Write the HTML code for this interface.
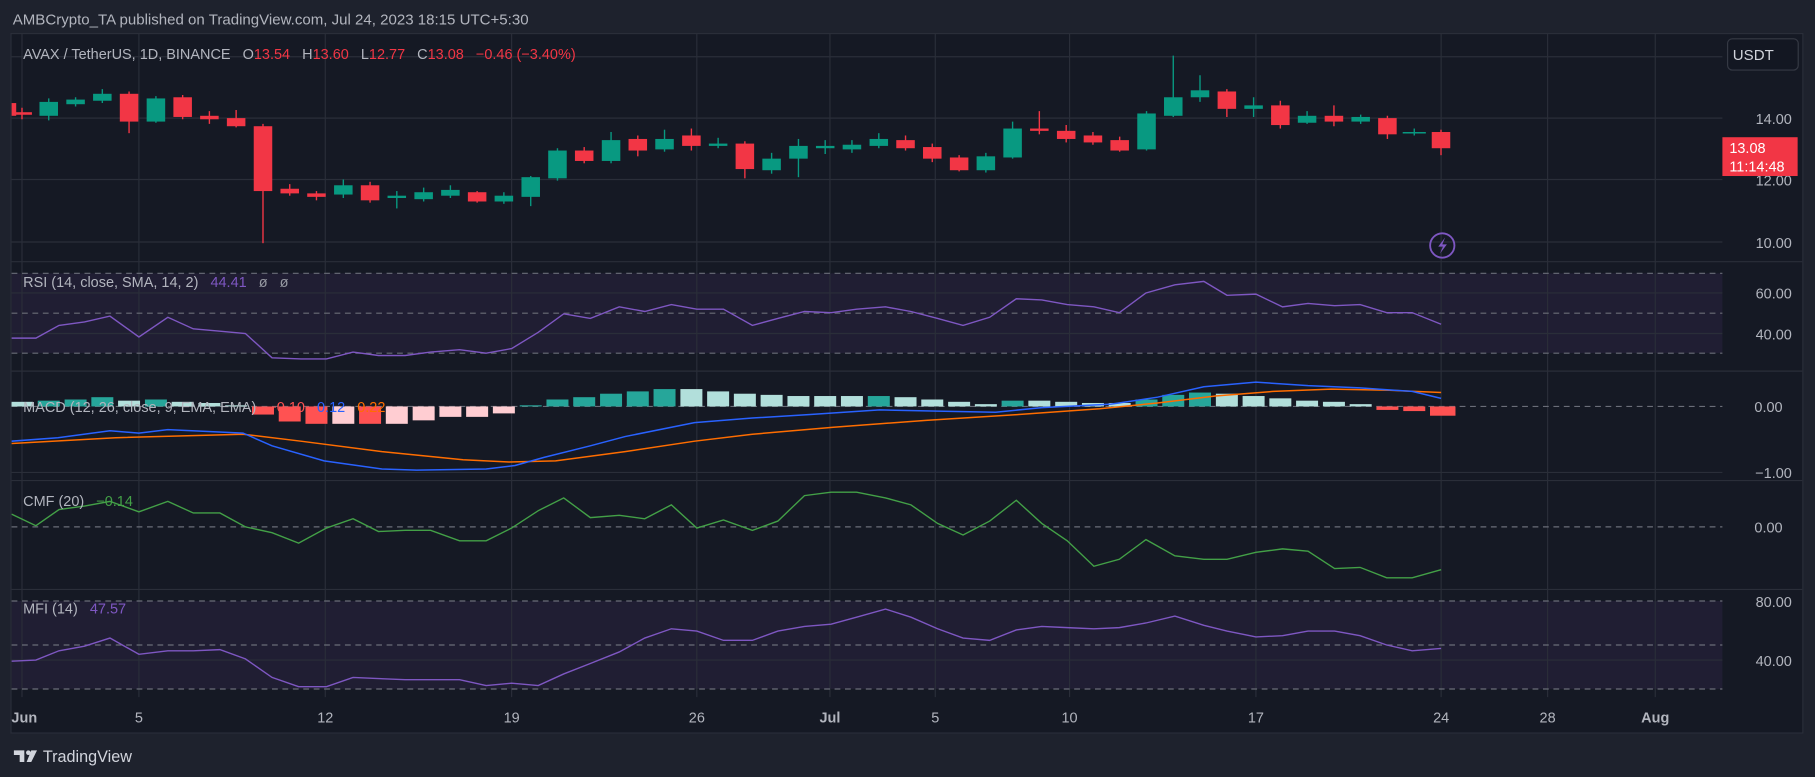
<!DOCTYPE html>
<html><head><meta charset="utf-8"><style>
html,body{margin:0;padding:0;background:#1e222d;width:1815px;height:777px;overflow:hidden}
svg{display:block}
text{font-family:"Liberation Sans","DejaVu Sans",sans-serif;white-space:pre}
</style></head><body>
<svg width="1815" height="777" viewBox="0 0 1568 671" preserveAspectRatio="none" xmlns="http://www.w3.org/2000/svg">
<defs><clipPath id="pc"><rect x="10" y="29" width="1478" height="573"/></clipPath></defs>
<rect width="1568" height="671" fill="#1e222d"/>
<text x="11" y="21" font-size="13" fill="#b2b5be">AMBCrypto_TA published on TradingView.com, Jul 24, 2023 18:15 UTC+5:30</text>
<rect x="9.5" y="29" width="1548" height="604" fill="#151924" stroke="#2a2e39" stroke-width="1"/>
<rect x="10" y="236" width="1478" height="69" fill="#201e33"/>
<rect x="10" y="519" width="1478" height="76" fill="#201e33"/>
<g stroke="#2a2e39" stroke-width="1">
<line x1="10" x2="1557" y1="226" y2="226"/><line x1="10" x2="1557" y1="320.5" y2="320.5"/>
<line x1="10" x2="1557" y1="415" y2="415"/><line x1="10" x2="1557" y1="509" y2="509"/>
<line x1="10" x2="1488" y1="49" y2="49"/><line x1="10" x2="1488" y1="102" y2="102"/>
<line x1="10" x2="1488" y1="155" y2="155"/><line x1="10" x2="1488" y1="209" y2="209"/>
<line x1="10" x2="1488" y1="253" y2="253"/><line x1="10" x2="1488" y1="288" y2="288"/>
<line x1="10" x2="1488" y1="408" y2="408"/><line x1="10" x2="1488" y1="570" y2="570"/>
<line x1="19" x2="19" y1="29" y2="602"/><line x1="120" x2="120" y1="29" y2="602"/>
<line x1="281" x2="281" y1="29" y2="602"/><line x1="442" x2="442" y1="29" y2="602"/>
<line x1="602" x2="602" y1="29" y2="602"/><line x1="717" x2="717" y1="29" y2="602"/>
<line x1="808" x2="808" y1="29" y2="602"/><line x1="924" x2="924" y1="29" y2="602"/>
<line x1="1085" x2="1085" y1="29" y2="602"/><line x1="1245" x2="1245" y1="29" y2="602"/>
<line x1="1337" x2="1337" y1="29" y2="602"/><line x1="1430" x2="1430" y1="29" y2="602"/>
</g>
<g stroke="#6a6d78" stroke-width="1" stroke-dasharray="5,4">
<line x1="10" x2="1488" y1="236" y2="236"/><line x1="10" x2="1488" y1="270.5" y2="270.5"/><line x1="10" x2="1488" y1="305" y2="305"/>
<line x1="10" x2="1488" y1="351" y2="351"/><line x1="10" x2="1488" y1="455" y2="455"/>
<line x1="10" x2="1488" y1="519" y2="519"/><line x1="10" x2="1488" y1="557" y2="557"/><line x1="10" x2="1488" y1="595" y2="595"/>
</g>
<g clip-path="url(#pc)">
<g fill="#f23645" stroke="#f23645" stroke-width="1.2">
<rect x="10" y="89" width="4" height="11" stroke="none"/>
<line x1="19" x2="19" y1="93" y2="103"/><rect x="11" y="97.5" width="16" height="1" />
<line x1="111.5" x2="111.5" y1="79" y2="115"/><rect x="103.5" y="81" width="16" height="24" stroke="none"/>
<line x1="157.8" x2="157.8" y1="82" y2="103"/><rect x="149.8" y="84" width="16" height="17" stroke="none"/>
<line x1="180.9" x2="180.9" y1="96" y2="107"/><rect x="172.9" y="100" width="16" height="3" stroke="none"/>
<line x1="204" x2="204" y1="95" y2="110"/><rect x="196" y="102" width="16" height="7" stroke="none"/>
<line x1="227.2" x2="227.2" y1="107" y2="210"/><rect x="219.2" y="109" width="16" height="56" stroke="none"/>
<line x1="250.3" x2="250.3" y1="159" y2="169"/><rect x="242.3" y="163" width="16" height="4" stroke="none"/>
<line x1="273.4" x2="273.4" y1="165" y2="173"/><rect x="265.4" y="167" width="16" height="3" stroke="none"/>
<line x1="319.7" x2="319.7" y1="157" y2="175"/><rect x="311.7" y="160" width="16" height="13" stroke="none"/>
<line x1="412.2" x2="412.2" y1="165" y2="175"/><rect x="404.2" y="166" width="16" height="8" stroke="none"/>
<line x1="504.7" x2="504.7" y1="127" y2="141"/><rect x="496.7" y="130" width="16" height="9" stroke="none"/>
<line x1="551" x2="551" y1="117" y2="135"/><rect x="543" y="120" width="16" height="10" stroke="none"/>
<line x1="597.3" x2="597.3" y1="111" y2="130"/><rect x="589.3" y="117" width="16" height="9" stroke="none"/>
<line x1="643.5" x2="643.5" y1="122" y2="154"/><rect x="635.5" y="124" width="16" height="22" stroke="none"/>
<line x1="782.3" x2="782.3" y1="117" y2="130"/><rect x="774.3" y="121" width="16" height="7" stroke="none"/>
<line x1="805.4" x2="805.4" y1="124" y2="140"/><rect x="797.4" y="127" width="16" height="10" stroke="none"/>
<line x1="828.6" x2="828.6" y1="134" y2="148"/><rect x="820.6" y="136" width="16" height="11" stroke="none"/>
<line x1="897.9" x2="897.9" y1="96" y2="116"/><rect x="889.9" y="111" width="16" height="2" stroke="none"/>
<line x1="921.1" x2="921.1" y1="108" y2="123"/><rect x="913.1" y="113" width="16" height="7" stroke="none"/>
<line x1="944.2" x2="944.2" y1="114" y2="125"/><rect x="936.2" y="117" width="16" height="6" stroke="none"/>
<line x1="967.3" x2="967.3" y1="118" y2="131"/><rect x="959.3" y="121" width="16" height="9" stroke="none"/>
<line x1="1059.9" x2="1059.9" y1="77" y2="101"/><rect x="1051.9" y="79" width="16" height="15" stroke="none"/>
<line x1="1106.1" x2="1106.1" y1="87" y2="111"/><rect x="1098.1" y="91" width="16" height="17" stroke="none"/>
<line x1="1152.4" x2="1152.4" y1="91" y2="109"/><rect x="1144.4" y="100" width="16" height="5" stroke="none"/>
<line x1="1198.6" x2="1198.6" y1="100" y2="120"/><rect x="1190.6" y="102" width="16" height="14" stroke="none"/>
<line x1="1244.9" x2="1244.9" y1="112" y2="134"/><rect x="1236.9" y="114" width="16" height="14" stroke="none"/>
</g>
<g fill="#089981" stroke="#089981" stroke-width="1.2">
<line x1="42.1" x2="42.1" y1="85" y2="104"/><rect x="34.1" y="88" width="16" height="12" stroke="none"/>
<line x1="65.3" x2="65.3" y1="84" y2="92"/><rect x="57.3" y="86" width="16" height="4" stroke="none"/>
<line x1="88.4" x2="88.4" y1="77" y2="89"/><rect x="80.4" y="81" width="16" height="6" stroke="none"/>
<line x1="134.7" x2="134.7" y1="83" y2="106"/><rect x="126.7" y="85" width="16" height="20" stroke="none"/>
<line x1="296.6" x2="296.6" y1="155" y2="171"/><rect x="288.6" y="160" width="16" height="8" stroke="none"/>
<line x1="342.8" x2="342.8" y1="165" y2="180"/><rect x="334.8" y="169" width="16" height="2" stroke="none"/>
<line x1="366" x2="366" y1="162" y2="174"/><rect x="358" y="166" width="16" height="6" stroke="none"/>
<line x1="389.1" x2="389.1" y1="160" y2="171"/><rect x="381.1" y="164" width="16" height="5" stroke="none"/>
<line x1="435.3" x2="435.3" y1="166" y2="176"/><rect x="427.3" y="169" width="16" height="5" stroke="none"/>
<line x1="458.5" x2="458.5" y1="152" y2="178"/><rect x="450.5" y="153" width="16" height="17" stroke="none"/>
<line x1="481.6" x2="481.6" y1="128" y2="156"/><rect x="473.6" y="130" width="16" height="24" stroke="none"/>
<line x1="527.9" x2="527.9" y1="114" y2="141"/><rect x="519.9" y="121" width="16" height="18" stroke="none"/>
<line x1="574.1" x2="574.1" y1="112" y2="131"/><rect x="566.1" y="120" width="16" height="9" stroke="none"/>
<line x1="620.4" x2="620.4" y1="119" y2="128"/><rect x="612.4" y="124" width="16" height="2" stroke="none"/>
<line x1="666.6" x2="666.6" y1="132" y2="150"/><rect x="658.6" y="137" width="16" height="10" stroke="none"/>
<line x1="689.8" x2="689.8" y1="120" y2="153"/><rect x="681.8" y="126" width="16" height="11" stroke="none"/>
<line x1="712.9" x2="712.9" y1="121" y2="133"/><rect x="704.9" y="126" width="16" height="2" stroke="none"/>
<line x1="736" x2="736" y1="121" y2="132"/><rect x="728" y="125" width="16" height="4" stroke="none"/>
<line x1="759.2" x2="759.2" y1="115" y2="128"/><rect x="751.2" y="120" width="16" height="6" stroke="none"/>
<line x1="851.7" x2="851.7" y1="132" y2="149"/><rect x="843.7" y="135" width="16" height="12" stroke="none"/>
<line x1="874.8" x2="874.8" y1="105" y2="137"/><rect x="866.8" y="111" width="16" height="25" stroke="none"/>
<line x1="990.5" x2="990.5" y1="96" y2="130"/><rect x="982.5" y="98" width="16" height="31" stroke="none"/>
<line x1="1013.6" x2="1013.6" y1="48" y2="101"/><rect x="1005.6" y="84" width="16" height="16" stroke="none"/>
<line x1="1036.7" x2="1036.7" y1="65" y2="88"/><rect x="1028.7" y="78" width="16" height="6" stroke="none"/>
<line x1="1083" x2="1083" y1="84" y2="101"/><rect x="1075" y="91" width="16" height="3" stroke="none"/>
<line x1="1129.2" x2="1129.2" y1="96" y2="107"/><rect x="1121.2" y="100" width="16" height="6" stroke="none"/>
<line x1="1175.5" x2="1175.5" y1="99" y2="107"/><rect x="1167.5" y="101" width="16" height="4" stroke="none"/>
<line x1="1221.8" x2="1221.8" y1="111" y2="117"/><rect x="1211.8" y="114" width="20" height="1.3" stroke="none"/>
</g>
<polyline fill="none" stroke="#7e57c2" stroke-width="1.2" points="10,292 31,292 51,281 73,278 95,273 120,291 145,274 167,284 190,286 212,288 235,309 260,310 282,310 305,304 327,307 350,307 372,304 397,302 420,305 442,301 465,287 487,271 510,275 535,265 557,269 580,263 602,267 625,267 650,281 672,275 695,269 718,270 740,267 765,265 787,269 810,275 832,281 855,274 878,258 900,259 922,263 945,265 967,270 990,253 1015,246 1040,243 1060,255 1085,254 1108,265 1130,262 1153,264 1175,263 1198,270 1220,270 1245,280"/>
<g stroke="none">
<rect x="10" y="348" width="8" height="3" fill="#b2dfdb"/>
<rect x="9.5" y="347" width="19" height="4" fill="#b2dfdb"/>
<rect x="32.6" y="346" width="19" height="5" fill="#26a69a"/>
<rect x="55.8" y="345" width="19" height="6" fill="#26a69a"/>
<rect x="78.9" y="343" width="19" height="8" fill="#26a69a"/>
<rect x="102" y="346" width="19" height="5" fill="#b2dfdb"/>
<rect x="125.2" y="345" width="19" height="6" fill="#26a69a"/>
<rect x="148.3" y="347" width="19" height="4" fill="#b2dfdb"/>
<rect x="171.4" y="348" width="19" height="3" fill="#b2dfdb"/>
<rect x="194.5" y="350" width="19" height="1" fill="#b2dfdb"/>
<rect x="217.7" y="351" width="19" height="7" fill="#ff5252"/>
<rect x="240.8" y="351" width="19" height="13" fill="#ff5252"/>
<rect x="263.9" y="351" width="19" height="15" fill="#ff5252"/>
<rect x="287.1" y="351" width="19" height="15" fill="#ffcdd2"/>
<rect x="310.2" y="351" width="19" height="15" fill="#ff5252"/>
<rect x="333.3" y="351" width="19" height="15" fill="#ffcdd2"/>
<rect x="356.5" y="351" width="19" height="12" fill="#ffcdd2"/>
<rect x="379.6" y="351" width="19" height="9" fill="#ffcdd2"/>
<rect x="402.7" y="351" width="19" height="9" fill="#ffcdd2"/>
<rect x="425.8" y="351" width="19" height="6" fill="#ffcdd2"/>
<rect x="449" y="350" width="19" height="1" fill="#26a69a"/>
<rect x="472.1" y="345" width="19" height="6" fill="#26a69a"/>
<rect x="495.2" y="343" width="19" height="8" fill="#26a69a"/>
<rect x="518.4" y="340" width="19" height="11" fill="#26a69a"/>
<rect x="541.5" y="338" width="19" height="13" fill="#26a69a"/>
<rect x="564.6" y="336" width="19" height="15" fill="#26a69a"/>
<rect x="587.8" y="336" width="19" height="15" fill="#b2dfdb"/>
<rect x="610.9" y="338" width="19" height="13" fill="#b2dfdb"/>
<rect x="634" y="340" width="19" height="11" fill="#b2dfdb"/>
<rect x="657.1" y="341" width="19" height="10" fill="#b2dfdb"/>
<rect x="680.3" y="342" width="19" height="9" fill="#b2dfdb"/>
<rect x="703.4" y="342" width="19" height="9" fill="#b2dfdb"/>
<rect x="726.5" y="342" width="19" height="9" fill="#b2dfdb"/>
<rect x="749.7" y="342" width="19" height="9" fill="#26a69a"/>
<rect x="772.8" y="343" width="19" height="8" fill="#b2dfdb"/>
<rect x="795.9" y="345" width="19" height="6" fill="#b2dfdb"/>
<rect x="819.1" y="347" width="19" height="4" fill="#b2dfdb"/>
<rect x="842.2" y="349" width="19" height="2" fill="#b2dfdb"/>
<rect x="865.3" y="346" width="19" height="5" fill="#26a69a"/>
<rect x="888.4" y="346" width="19" height="5" fill="#b2dfdb"/>
<rect x="911.6" y="347" width="19" height="4" fill="#b2dfdb"/>
<rect x="934.7" y="348" width="19" height="3" fill="#b2dfdb"/>
<rect x="957.8" y="348" width="19" height="3" fill="#b2dfdb"/>
<rect x="981" y="345" width="19" height="6" fill="#26a69a"/>
<rect x="1004.1" y="341" width="19" height="10" fill="#26a69a"/>
<rect x="1027.2" y="339" width="19" height="12" fill="#26a69a"/>
<rect x="1050.4" y="340" width="19" height="11" fill="#b2dfdb"/>
<rect x="1073.5" y="342" width="19" height="9" fill="#b2dfdb"/>
<rect x="1096.6" y="344" width="19" height="7" fill="#b2dfdb"/>
<rect x="1119.7" y="346" width="19" height="5" fill="#b2dfdb"/>
<rect x="1142.9" y="347" width="19" height="4" fill="#b2dfdb"/>
<rect x="1166" y="349" width="19" height="2" fill="#b2dfdb"/>
<rect x="1189.1" y="351" width="19" height="3" fill="#ff5252"/>
<rect x="1212.3" y="351" width="19" height="4" fill="#ff5252"/>
<rect x="1235.4" y="351" width="22" height="8" fill="#ff5252"/>
</g>
<polyline fill="none" stroke="#ff6d00" stroke-width="1.3" points="10,383 100,378 210,375 260,381 330,390 400,397 440,399 480,398 540,390 600,381 650,375 720,369 800,363 880,358 950,353 1000,348 1050,342 1100,338 1150,336 1200,337 1245,339"/>
<polyline fill="none" stroke="#2962ff" stroke-width="1.3" points="10,381 50,378 95,372 120,374 145,371 210,374 235,385 280,398 330,405 360,406 420,405 445,402 470,395 510,385 540,377 600,365 650,361 700,358 760,354 810,355 860,356 900,352 960,349 1000,343 1040,334 1085,330 1130,333 1175,335 1220,338 1245,344"/>
<polyline fill="none" stroke="#43a047" stroke-width="1.2" points="10,444 31,454 51,440 73,437 95,433 120,442 145,433 167,443 190,443 212,455 235,460 258,469 282,456 305,448 327,459 350,458 372,458 397,467 420,467 442,456 465,441 487,430 510,447 535,445 557,448 580,436 602,456 625,449 650,458 672,450 695,428 718,425 740,425 765,430 787,436 810,452 832,462 855,450 878,432 900,452 922,467 945,489 967,483 990,466 1015,480 1040,483 1060,483 1085,477 1108,474 1130,476 1153,491 1175,490 1198,499 1220,499 1245,492"/>
<polyline fill="none" stroke="#7e57c2" stroke-width="1.2" points="10,571 31,570 51,562 73,558 95,551 120,565 145,562 167,562 190,561 212,569 235,585 258,593 282,593 305,585 327,586 350,587 372,587 397,587 420,592 442,590 465,592 487,582 510,573 535,563 557,551 580,543 602,545 625,553 650,553 672,545 695,541 718,539 740,533 765,526 787,533 810,543 832,551 855,553 878,544 900,541 922,542 945,543 967,542 990,538 1015,532 1040,540 1060,545 1085,550 1108,549 1130,545 1153,545 1175,549 1198,557 1220,562 1245,560"/>
</g>
<circle cx="1246" cy="212" r="10.5" fill="none" stroke="#7e57c2" stroke-width="1.6"/>
<path d="M1248.5,205 L1242.5,213 L1246.5,213 L1244,219 L1250,211 L1246,211 Z" fill="#7e57c2"/>
<g font-size="12.5" fill="#b2b5be">
<text x="20" y="51">AVAX / TetherUS, 1D, BINANCE   O<tspan fill="#f23645">13.54</tspan>   H<tspan fill="#f23645">13.60</tspan>   L<tspan fill="#f23645">12.77</tspan>   C<tspan fill="#f23645">13.08</tspan>   <tspan fill="#f23645">−0.46 (−3.40%)</tspan></text>
<text x="20" y="248">RSI (14, close, SMA, 14, 2)   <tspan fill="#7e57c2">44.41</tspan>   <tspan fill="#9598a1">ø   ø</tspan></text>
<text x="20" y="356">MACD (12, 26, close, 9, EMA, EMA)   <tspan fill="#ff5252">−0.10</tspan>   <tspan fill="#2962ff">0.12</tspan>   <tspan fill="#ff6d00">0.22</tspan></text>
<text x="20" y="437">CMF (20)   <tspan fill="#43a047">−0.14</tspan></text>
<text x="20" y="530">MFI (14)   <tspan fill="#7e57c2">47.57</tspan></text>
</g>
<g font-size="12.5" fill="#b2b5be" text-anchor="end">
<text x="1548" y="107">14.00</text><text x="1548" y="160">12.00</text><text x="1548" y="214">10.00</text>
<text x="1548" y="258">60.00</text><text x="1548" y="293">40.00</text>
<text x="1540" y="356">0.00</text><text x="1548" y="413">−1.00</text>
<text x="1540" y="460">0.00</text>
<text x="1548" y="524">80.00</text><text x="1548" y="575">40.00</text>
</g>
<rect x="1492.5" y="33.5" width="61" height="27" rx="4" fill="#131722" stroke="#363a45"/>
<text x="1497" y="52" font-size="13" fill="#d1d4dc">USDT</text>
<rect x="1488" y="118.5" width="65" height="33.5" fill="#f23645"/>
<text x="1494" y="132" font-size="12.5" fill="#ffffff">13.08</text>
<text x="1494" y="148" font-size="12.5" fill="#ffffff">11:14:48</text>
<g font-size="12.5" fill="#b2b5be" text-anchor="middle">
<text x="21" y="624" font-weight="bold">Jun</text><text x="120" y="624">5</text><text x="281" y="624">12</text>
<text x="442" y="624">19</text><text x="602" y="624">26</text><text x="717" y="624" font-weight="bold">Jul</text>
<text x="808" y="624">5</text><text x="924" y="624">10</text><text x="1085" y="624">17</text>
<text x="1245" y="624">24</text><text x="1337" y="624">28</text><text x="1430" y="624" font-weight="bold">Aug</text>
</g>
<g fill="#d1d4dc">
<path d="M12,648 h9 v10 h-4 v-6 h-5 z"/>
<circle cx="24.5" cy="650" r="2"/>
<path d="M27,648 h5 l-5,10 h-4 z"/>
</g>
<text x="37" y="658" font-size="14" fill="#d1d4dc">TradingView</text>
</svg>
</body></html>
